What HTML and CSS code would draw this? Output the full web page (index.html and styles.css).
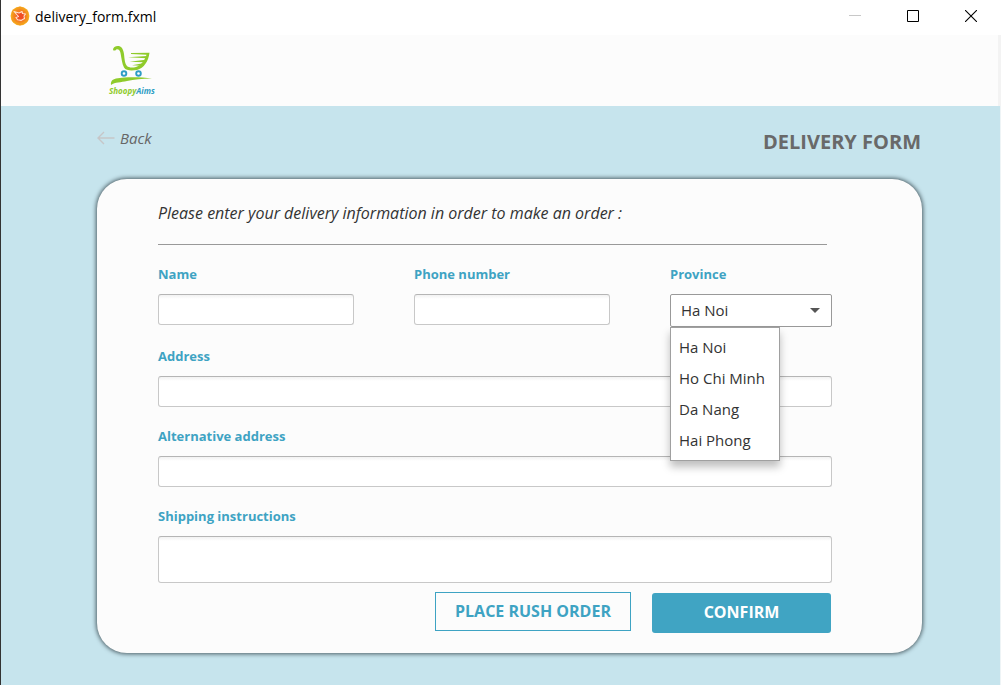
FILE: index.html
```html
<!DOCTYPE html>
<html lang="en">
<head>
<meta charset="utf-8">
<title>delivery_form.fxml</title>
<meta name="viewport" content="width=device-width, initial-scale=1">
<link rel="stylesheet" href="styles.css">
</head>
<body>
<div class="window">
  <header class="titlebar">
    <svg class="app-icon" viewBox="0 0 20 20" aria-hidden="true">
      <circle cx="10" cy="10" r="9.400" fill="#f7a91c"/>
      <path d="M10 .6L18 5V15L10 19.400L2 15V5Z" fill="#f39a1e"/>
      <circle cx="10" cy="10" r="6.800" fill="#f58220"/>
      <circle cx="10.500" cy="10.500" r="4.600" fill="#f04e23"/>
      <path d="M4 5.500L9 7L12 5.500L12.500 7.500L15.500 8L14 10L14.500 12.500L11 14.400L7.500 13.800L6 11.500L8.500 10.500Z" fill="none" stroke="#ffe3cf" stroke-width="1.100" stroke-linejoin="round"/>
    </svg>
    <h1 class="window-title">delivery_form.fxml</h1>
    <div class="window-controls">
      <button type="button" class="window-button" aria-label="Minimize" disabled><svg viewBox="0 0 12 12"><path d="M0 5.500H12" stroke="#c8c8c8"/></svg></button>
      <button type="button" class="window-button" aria-label="Maximize"><svg viewBox="0 0 12 12"><path d="M.5 .5H11.500V11.500H.5Z" fill="none" stroke="#000"/></svg></button>
      <button type="button" class="window-button" aria-label="Close"><svg viewBox="0 0 12 12"><path d="M0 0L12 12M12 0L0 12" stroke="#000" stroke-width="1.100"/></svg></button>
    </div>
  </header>

  <div class="brandbar">
    <svg class="logo" viewBox="0 0 52 54" role="img" aria-label="ShoopyAims">
      <path d="M6 6C6 3 9 1.500 12 2C15 2.700 16.500 6 17 10C17.500 15 18 20 20 22C21.500 23.500 25 24 29 23C34 21.500 37.500 17 39.500 10.800L24 10V9L42.500 8.800C41.500 17 37 24.500 30 26C25 26.800 19 27 17 23.500C15 20 14.500 14 13.500 9C13 6 11.500 4.800 9.500 5.200C9 6.500 7 7 6 6Z" fill="#8fcb2b"/>
      <path d="M21 13.300L40 12L39.500 14.200Z M22.500 17.800L38.500 15.800L37 18.200Z M25 21.300L36 19.300L34 21.700Z" fill="#8fcb2b"/>
      <circle cx="17" cy="29.500" r="2.300" fill="#fff" stroke="#2e9dc4" stroke-width="1.900"/>
      <circle cx="31.500" cy="29.500" r="2.300" fill="#fff" stroke="#2e9dc4" stroke-width="1.900"/>
      <path d="M4 41C3.500 37.500 5 35.500 9 34.500C20 32.500 34 33 45 34.500C35 34.800 27 35.500 20 37C14 38.500 8 38 4 41Z" fill="#8fcb2b"/>
      <text x="2" y="50" class="logo-text"><tspan fill="#8fcb2b">Shoopy</tspan><tspan fill="#2e9dc4">Aims</tspan></text>
    </svg>
  </div>

  <main class="page">
    <div class="page-head">
      <a class="back" href="#">
        <svg viewBox="0 0 18 14" aria-hidden="true"><path d="M17.500 7H1M7 1L1 7L7 13" fill="none" stroke="#c6c6c8" stroke-width="1.400"/></svg>
        Back
      </a>
      <h2 class="page-title">DELIVERY FORM</h2>
    </div>

    <form class="card">
      <p class="intro">Please enter your delivery information in order to make an order :</p>
      <div class="row">
        <div class="field">
          <label for="name">Name</label>
          <input id="name" type="text" class="control">
        </div>
        <div class="field">
          <label for="phone">Phone number</label>
          <input id="phone" type="tel" class="control">
        </div>
        <div class="field">
          <label for="province">Province</label>
          <div class="combo">
            <select id="province" class="combo-select">
              <option selected>Ha Noi</option>
              <option>Ho Chi Minh</option>
              <option>Da Nang</option>
              <option>Hai Phong</option>
            </select>
            <svg class="combo-arrow" viewBox="0 0 10 5" aria-hidden="true"><path d="M0 0H10L5 5Z" fill="#555"/></svg>
            <ul class="combo-menu">
              <li>Ha Noi</li>
              <li>Ho Chi Minh</li>
              <li>Da Nang</li>
              <li>Hai Phong</li>
            </ul>
          </div>
        </div>
      </div>
      <div class="field">
        <label for="address">Address</label>
        <input id="address" type="text" class="control">
      </div>
      <div class="field">
        <label for="alt-address">Alternative address</label>
        <input id="alt-address" type="text" class="control">
      </div>
      <div class="field">
        <label for="shipping">Shipping instructions</label>
        <textarea id="shipping" class="control control-tall"></textarea>
      </div>
      <div class="actions">
        <button type="button" class="button button-outline">PLACE RUSH ORDER</button>
        <button type="submit" class="button button-solid">CONFIRM</button>
      </div>
    </form>
  </main>
</div>
</body>
</html>
```
FILE: styles.css
```css
* {
  box-sizing: border-box;
}

body {
  margin: 0;
  font-family: "Open Sans", "Noto Sans", sans-serif;
  font-size: 14px;
  color: #333;
}

.window {
  display: flex;
  flex-direction: column;
  min-height: 100vh;
  border-left: 1px solid #333;
  background: #fff;
}

.titlebar {
  display: flex;
  align-items: center;
  height: 35px;
  padding: 0 1px 3px 9px;
}

.app-icon {
  width: 20px;
  height: 20px;
}

.window-title {
  flex: 1;
  margin: 0 0 0 5px;
  font-size: 14px;
  font-weight: 400;
  color: #000;
}

.window-controls {
  display: flex;
}

.window-button {
  display: flex;
  align-items: center;
  justify-content: center;
  width: 58px;
  height: 32px;
  padding: 0;
  border: 0;
  background: none;
}

.window-button svg {
  width: 12px;
  height: 12px;
}

.brandbar {
  height: 71px;
  padding: 9px 0 0 106px;
  border-right: 3px solid #f3f3f3;
  background: #fcfcfc;
}

.logo {
  display: block;
  width: 52px;
  height: 54px;
}

.logo-text {
  font-family: "Open Sans", sans-serif;
  font-size: 8px;
  font-style: italic;
  font-weight: 700;
}

.page {
  flex: 1;
  padding: 22px 78px 31px 96px;
  border-right: 1px solid #eef4f6;
  background: #c6e4ed;
}

.page-head {
  display: flex;
  justify-content: space-between;
  height: 51px;
  padding-right: 1px;
}

.back {
  display: flex;
  align-items: center;
  gap: 5px;
  height: 20px;
  font-size: 15px;
  font-style: italic;
  color: #666;
  text-decoration: none;
}

.back svg {
  width: 18px;
  height: 14px;
}

.page-title {
  margin: 0;
  font-size: 20px;
  line-height: 28px;
  font-weight: 700;
  color: #696969;
}

.card {
  display: flex;
  flex-direction: column;
  padding: 21px 90px 20px 61px;
  border-radius: 30px;
  background: #fcfcfc;
  box-shadow: 0 0 4px 1px #4b5d64;
}

.intro {
  margin: 0 5px 18px 0;
  padding-bottom: 17px;
  border-bottom: 1px solid #999;
  font-size: 16px;
  line-height: 27px;
  font-style: italic;
}

.row {
  display: grid;
  grid-template-columns: 196fr 196fr 162fr;
  gap: 60px;
}

.field {
  display: flex;
  flex-direction: column;
  gap: 8px;
  margin-bottom: 18px;
}

.row .field {
  margin-bottom: 20px;
}

.field label {
  font-size: 13px;
  line-height: 23px;
  font-weight: 700;
  color: #3ea3c3;
}

.control {
  width: 100%;
  height: 31px;
  padding: 4px 8px;
  border: 1px solid #c8c8c8;
  border-top-color: #b5b5b5;
  border-radius: 3px;
  background: #fff linear-gradient(#f2f2f2, #fff) top / 100% 4px no-repeat;
  font: inherit;
  resize: none;
}

.control-tall {
  height: 47px;
}

.field:has(.control-tall) {
  margin-bottom: 9px;
}

.combo {
  position: relative;
  height: 31px;
  font-size: 15px;
}

.combo-select {
  width: 100%;
  height: 33px;
  padding: 0 10px 2px;
  border: 1px solid #999;
  border-radius: 2px;
  background: #fff;
  font: inherit;
  color: #333;
  appearance: none;
}

.combo-arrow {
  position: absolute;
  top: 14px;
  right: 12px;
  width: 10px;
  height: 5px;
}

.combo-menu {
  position: absolute;
  top: 33px;
  left: 0;
  width: 110px;
  margin: 0;
  padding: 4px 8px;
  border: 1px solid #a0a0a0;
  background: #fff;
  box-shadow: 0 6px 8px rgba(0, 0, 0, 0.25);
  list-style: none;
  line-height: 31px;
  white-space: nowrap;
}

.actions {
  display: flex;
  justify-content: flex-end;
  align-items: flex-start;
  gap: 21px;
  padding-right: 1px;
}

.button {
  padding: 0 0 2px;
  font: inherit;
  font-size: 16px;
  font-weight: 700;
}

.button-outline {
  width: 196px;
  height: 39px;
  border: 1px solid #3ea3c3;
  background: #fcfcfc;
  color: #3ea3c3;
}

.button-solid {
  width: 179px;
  height: 40px;
  margin-top: 1px;
  border: 0;
  border-radius: 3px;
  background: #40a4c3;
  color: #fff;
}
```
